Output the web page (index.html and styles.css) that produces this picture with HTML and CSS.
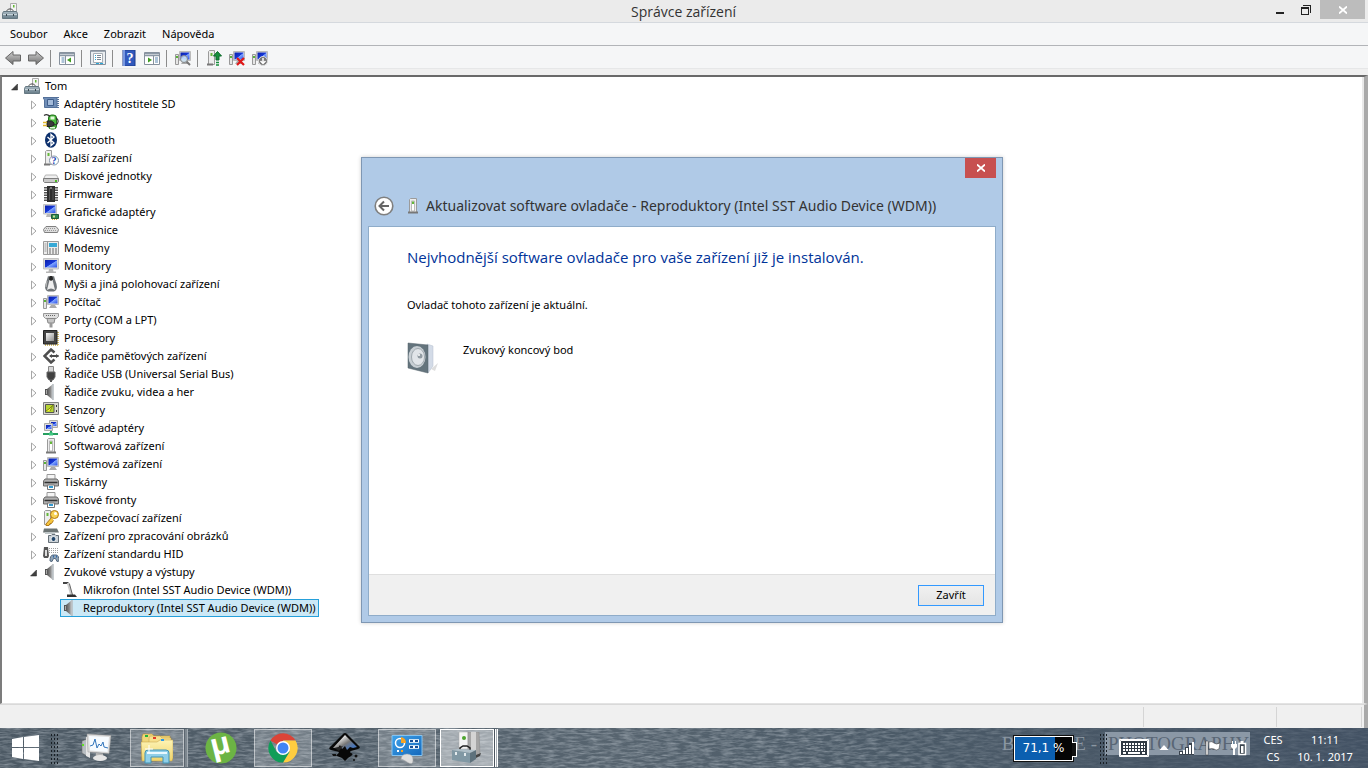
FILE: index.html
```html
<!DOCTYPE html>
<html lang="cs">
  <head>
    <meta charset="UTF-8" />
    <meta name="viewport" content="width=device-width, initial-scale=1.0" />
    <title>Správce zařízení</title>
    <link rel="stylesheet" href="styles.css">
  </head>
  <body>
    <!-- icon sprite -->
    <svg class="sprite" aria-hidden="true">
      <defs>
        <linearGradient id="g-metal" x1="0" y1="0" x2="1" y2="1"><stop offset="0" stop-color="#fafafa" /><stop offset="1" stop-color="#8e8e8e" /></linearGradient>
        <linearGradient id="g-screen" x1="0" y1="0" x2="1" y2="1"><stop offset="0" stop-color="#0a1fa8" /><stop offset="0.5" stop-color="#1738d8" /><stop offset="0.55" stop-color="#7fa4ff" /><stop offset="1" stop-color="#2a50e6" /></linearGradient>
        <linearGradient id="g-arrow" x1="0" y1="0" x2="0" y2="1"><stop offset="0" stop-color="#d0d0d0" /><stop offset="1" stop-color="#6e6e6e" /></linearGradient>
        <linearGradient id="g-box" x1="0" y1="0" x2="0" y2="1"><stop offset="0" stop-color="#a9b9c2" /><stop offset="1" stop-color="#667b87" /></linearGradient>
        <linearGradient id="g-cone" x1="0" y1="0" x2="1" y2="0"><stop offset="0" stop-color="#555" /><stop offset="0.6" stop-color="#8d8d8d" /><stop offset="1" stop-color="#d9dde0" /></linearGradient>
        <linearGradient id="g-folder" x1="0" y1="0" x2="0" y2="1"><stop offset="0" stop-color="#fdf3b4" /><stop offset="1" stop-color="#efd36b" /></linearGradient>
        <linearGradient id="g-panel" x1="0" y1="0" x2="1" y2="1"><stop offset="0" stop-color="#3fa2ea" /><stop offset="1" stop-color="#1468bb" /></linearGradient>
        <linearGradient id="g-ink" x1="0" y1="0" x2="1" y2="1"><stop offset="0.2" stop-color="#fff" /><stop offset="0.55" stop-color="#777" /><stop offset="0.8" stop-color="#4a76b8" /></linearGradient>
      </defs>

      <symbol id="i-toolbox" viewBox="0 0 16 16">
        <path d="M8.500 .5h6v9h-6z" fill="#f4f4f4" stroke="#aaa" />
        <path d="M11 2h1.500v2.500H11z" fill="#62b832" />
        <path d="M5 8.500V7.500L6.500 6h3L11 7.500v1" fill="none" stroke="#444" />
        <path d="M1.500 8.500h13l1 2v5H.5v-5z" fill="url(#g-box)" stroke="#667882" />
        <path d="M1 11.500h14" stroke="#c6d2d8" />
        <path d="M4.500 11v2M11.500 11v2" stroke="#37444c" />
      </symbol>
      <symbol id="i-sd" viewBox="0 0 16 16">
        <path d="M0 1.500h14v10H1.500V4z" fill="#6f8db6" stroke="#54719a" />
        <path d="M4.500 3.500h6v6h-6z" fill="#a4bbda" stroke="#3f5d8a" />
        <path d="M15 1v11" stroke="#54719a" stroke-dasharray="1 1" stroke-width="2" />
      </symbol>
      <symbol id="i-battery" viewBox="0 0 16 16">
        <rect x="5.500" y="1" width="8" height="14" rx="3" fill="#46b83a" stroke="#226e1a" />
        <path d="M7.500 2.500h4v3h-4zM7 13h5v1.500H7z" fill="#e4f9dc" />
        <path d="M1 1.500Q4-.5 7 2.500M13 4q2.500 1 2 4t-4 3" fill="none" stroke="#333" stroke-width="1.200" />
        <path d="M4 7h4.500l2.500 2v2l-2.500 1.500H4z" fill="#3b3b3b" stroke="#222" />
        <path d="M0 8.500h4M0 11.500h4" stroke="#e0b62d" stroke-width="1.500" />
      </symbol>
      <symbol id="i-bluetooth" viewBox="0 0 16 16">
        <ellipse cx="8" cy="8" rx="6" ry="7.800" fill="#0c2f6c" />
        <path d="M4.500 5l6.500 6-3 2.500v-11l3 2.500-6.500 6" fill="none" stroke="#fff" stroke-width="1.300" />
      </symbol>
      <symbol id="i-device" viewBox="0 0 16 16">
        <path d="M4.500 1.500l1-1h6v14h-7z" fill="#ededed" stroke="#9b9b9b" />
        <path d="M6.500 3h3v10h-3z" fill="#fff" stroke="#bbb" />
        <path d="M7 3.500h2V6H7z" fill="#65b83a" />
        <path d="M3 14.500h10" stroke="#777" stroke-width="2" />
      </symbol>
      <symbol id="i-tower" viewBox="0 0 16 16">
        <path d="M2.500 1.500l1-1h5v14h-6z" fill="#ededed" stroke="#9b9b9b" />
        <path d="M4.500 3h2v3h-2z" fill="#65b83a" />
        <path d="M1 14.500h6" stroke="#777" stroke-width="2" />
      </symbol>
      <symbol id="i-disk" viewBox="0 0 16 16">
        <path d="M2.500 7h11l2 4H.5z" fill="#f0f0f0" stroke="#b4b4b4" />
        <path d="M.5 10.500h15v3l-1 1h-13l-1-1z" fill="#c9c9c9" stroke="#7e7e7e" />
        <path d="M12 12h2v2h-2z" fill="#4ebb24" />
      </symbol>
      <symbol id="i-chip" viewBox="0 0 16 16">
        <path d="M2.500 1v14M13.500 1v14" stroke="#555" stroke-width="3" stroke-dasharray="1.500 1" />
        <path d="M4 0h8v16H4z" fill="#2d2d2d" />
        <path d="M6.500 2v12M10 2v12" stroke="#555" />
        <circle cx="8" cy="2" r="1" fill="#999" />
      </symbol>
      <symbol id="i-monitor" viewBox="0 0 16 16">
        <path d="M.5.5h15v10.500H.5z" fill="#d9d9d9" stroke="#c4c4c4" />
        <path d="M2 2h12v7.500H2z" fill="url(#g-screen)" />
        <path d="M6 11h4l.5 2.500H13V15H3v-1.500h2.500z" fill="#b5b5b5" />
      </symbol>
      <symbol id="i-display" viewBox="0 0 16 16">
        <path d="M.5.5h13v9.500H.5z" fill="#ddd" stroke="#c4c4c4" />
        <path d="M2 1.500h10.500v7.500H2z" fill="url(#g-screen)" />
        <path d="M4 10h5v3H3z" fill="#b8b8b8" />
        <path d="M8.500 10.500h7v4h-7z" fill="#2f8b52" stroke="#1e5c38" />
        <path d="M10 11.500h2v2h-2z" fill="#ccdf95" />
        <path d="M9 15.500h6" stroke="#d8ae2c" stroke-dasharray="1 1" />
      </symbol>
      <symbol id="i-keyboard" viewBox="0 0 16 16">
        <path d="M3 4.500h10l2.500 3-1 3h-13l-1-3z" fill="#dedede" stroke="#808080" />
        <path d="M3 6.500h10M2 8.500h12" stroke="#999" stroke-dasharray="1 1" />
      </symbol>
      <symbol id="i-modem" viewBox="0 0 16 16">
        <path d="M.5 1.500h15v13H.5z" fill="#ececec" stroke="#9b9b9b" />
        <path d="M4.500 1v14" stroke="#999" />
        <path d="M1.500 3h2v9h-2z" fill="#c4c4c4" />
        <path d="M6 3h8v4H6z" fill="#37a9d6" />
        <path d="M6 9h8M6 11h8M6 13h8" stroke="#686868" stroke-dasharray="2 1" />
      </symbol>
      <symbol id="i-mouse" viewBox="0 0 16 16">
        <path d="M5 0q3 2 6 0 1 4 2.500 8 1.500 6-2.500 7.500H5Q1 14 2.500 8 4 4 5 0z" fill="#6f7478" />
        <path d="M5.500 8l1-4h3l1 4 1.500 6q-4-3-8 0z" fill="#eee" />
        <path d="M6.500 0h3l.5 3.500-2 1.500-2-1.500z" fill="#252525" />
        <path d="M4 5l-1 6" stroke="#bbb" />
      </symbol>
      <symbol id="i-computer" viewBox="0 0 16 16">
        <path d="M.5 4.500h3v10h-3z" fill="#e6e6e6" stroke="#999" />
        <path d="M1 6h2v2H1z" fill="#57b336" />
        <path d="M4.500 1.500h11v9h-11z" fill="#ddd" stroke="#bbb" />
        <path d="M5.500 2.500h9v7h-9z" fill="url(#g-screen)" />
        <path d="M8 11h4l2 3H6z" fill="#aaa" />
      </symbol>
      <symbol id="i-port" viewBox="0 0 16 16">
        <path d="M.5 1.500h15v3l-2 2h-11l-2-2z" fill="#dedede" stroke="#999" />
        <path d="M3 3.500h10" stroke="#666" stroke-dasharray="1 1" />
        <path d="M4 6.500h8l-1 4.500H5z" fill="#c5c5c5" stroke="#888" />
        <path d="M6.500 11h3v4.500h-3z" fill="#999" />
      </symbol>
      <symbol id="i-cpu" viewBox="0 0 16 16">
        <path d="M15 2v13M2 15h13" stroke="#c8a93e" stroke-width="1.500" stroke-dasharray="1 1" />
        <path d="M.5.5h13.500v13.500H.5z" fill="#444" stroke="#242424" />
        <path d="M3 3h8v8H3z" fill="url(#g-metal)" />
      </symbol>
      <symbol id="i-storage" viewBox="0 0 16 16">
        <path d="M11.500 4.500L8 1.500 1.500 8 8 14.500l3.500-3" fill="none" stroke="#4e4e4e" stroke-width="2.500" />
        <path d="M7 8h8.500" stroke="#4e4e4e" stroke-width="2" />
        <path d="M6 8l3-2v4zM16 8l-3-2v4z" fill="#4e4e4e" />
      </symbol>
      <symbol id="i-usb" viewBox="0 0 16 16">
        <path d="M5.500.5h5v6h-5z" fill="#d8d8d8" stroke="#888" />
        <path d="M4 6h8v5l-2 3H6l-2-3z" fill="#414141" stroke="#666" />
        <path d="M8 14v2" stroke="#555" stroke-width="2" />
      </symbol>
      <symbol id="i-speaker" viewBox="0 0 16 16">
        <path d="M2 5h2.500v6H2z" fill="#555" />
        <path d="M4 5l6-5v16l-6-5z" fill="url(#g-cone)" />
        <path d="M10 0v16" stroke="#b6bcc1" stroke-width="1.500" />
        <path d="M3.500 6v4" stroke="#aaa" />
      </symbol>
      <symbol id="i-sensor" viewBox="0 0 16 16">
        <path d="M.5.5h15v12H.5z" fill="#dadacf" stroke="#828282" />
        <path d="M2.500 2.500h8.500v8H2.500z" fill="#b7d432" stroke="#555" />
        <path d="M3 9l3-2 4-4-3 6" fill="#fff23b" stroke="#7b8d12" />
        <path d="M13.500 3v2M13.500 8v2" stroke="#333" />
      </symbol>
      <symbol id="i-network" viewBox="0 0 16 16">
        <path d="M6.500.5h8v7h-8z" fill="#ddd" stroke="#aaa" />
        <path d="M8 2h5.500v4H8z" fill="url(#g-screen)" />
        <path d="M1.500 3.500h8v7h-8z" fill="#ddd" stroke="#aaa" />
        <path d="M3 5h5.500v4H3z" fill="url(#g-screen)" />
        <path d="M0 14h15M8 11v3" stroke="#26a060" stroke-width="2" />
        <path d="M6 12.500h4v3H6z" fill="#41c783" />
      </symbol>
      <symbol id="i-printer" viewBox="0 0 16 16">
        <path d="M4 .5h8v6H4z" fill="#f4f4f4" stroke="#999" />
        <path d="M2 5h12l1.500 2v5H.5V7z" fill="#b0b0b0" stroke="#6a6a6a" />
        <path d="M1.500 8.500h13" stroke="#333" stroke-width="1.500" />
        <path d="M4.500 11h7v4.500h-7z" fill="#fff" stroke="#777" />
        <path d="M6 13h4" stroke="#349ad0" stroke-width="2" />
      </symbol>
      <symbol id="i-key" viewBox="0 0 16 16">
        <path d="M1.500 1.500l1-1h5v14h-6z" fill="#ededed" stroke="#999" />
        <path d="M3.500 3h2v3h-2z" fill="#65b83a" />
        <path d="M9 7l-6 7v1.500h3l1-2h1.500l2-3" fill="#f5c53e" stroke="#b37a16" />
        <circle cx="11.500" cy="4.500" r="4" fill="#f8d255" stroke="#b37a16" />
        <circle cx="12.500" cy="3.500" r="1.500" fill="#fff" />
      </symbol>
      <symbol id="i-camera" viewBox="0 0 16 16">
        <path d="M1 .5h13l2 4H0z" fill="#6c7474" />
        <path d="M2 5h10" stroke="#bfc6c8" stroke-width="2" />
        <path d="M5.500 7.500H8l1-1h3l1 1h2.500v7h-10z" fill="#c8d0d6" stroke="#667078" />
        <circle cx="10.500" cy="11" r="2.500" fill="#24486d" stroke="#eee" />
      </symbol>
      <symbol id="i-hid" viewBox="0 0 16 16">
        <path d="M1 1h4l1 9-1 2H1l-1-2z" fill="#555" />
        <path d="M2 4h2v6H2z" fill="#ddd" />
        <path d="M6 2.500h10M6 4.500h10M6 6.500h10" stroke="#a0a0a0" stroke-dasharray="1 1" />
        <path d="M7 15q0-6 3-6h3q3 0 3 6l-2 .5-1.500-3h-2L9 15.500z" fill="#8fa3b6" stroke="#53677c" />
        <path d="M10 10.500h1M13 10.500h1" stroke="#2f67a8" stroke-width="2" />
      </symbol>
      <symbol id="i-mic" viewBox="0 0 16 16">
        <path d="M1 0h5l2 2H1z" fill="#444" />
        <path d="M6 1l3.500 12" stroke="#ccc" stroke-width="2.500" />
        <path d="M7.500 2l3 11" stroke="#666" />
        <path d="M5 12.500h8l2 2.500H5z" fill="#303030" />
      </symbol>

      <!-- toolbar -->
      <symbol id="t-back" viewBox="0 0 16 16"><path d="M.5 8L8 1.500V5h7.500v6H8v3.500z" fill="url(#g-arrow)" stroke="#666" /></symbol>
      <symbol id="t-forward" viewBox="0 0 16 16"><path d="M15.500 8L8 1.500V5H.5v6H8v3.500z" fill="url(#g-arrow)" stroke="#666" /></symbol>
      <symbol id="t-tree" viewBox="0 0 16 16">
        <path d="M.5 2.500h15v12H.5z" fill="#fff" stroke="#87919d" />
        <path d="M1 3.500h14M1 5.500h14" stroke="#8b98a5" stroke-width="1.500" />
        <path d="M2.500 8h3M2.500 10h3M2.500 12h3" stroke="#5b87af" /><path d="M6.500 6v9" stroke="#87919d" />
        <path d="M12 7.500v5l-4-2.500z" fill="#3f9c21" />
      </symbol>
      <symbol id="t-props" viewBox="0 0 16 16">
        <path d="M.5.5h15v14H.5z" fill="#e9edf0" stroke="#87919d" />
        <path d="M1 1.500h14" stroke="#9fa9b4" />
        <path d="M3.500 3.500h9v9h-9z" fill="#fff" stroke="#a6adb5" />
        <path d="M5 5.500h1M5 7.500h1M5 9.500h1" stroke="#2aa8d8" /><path d="M7 5.500h4M7 7.500h4M7 9.500h4" stroke="#7c8894" />
        <path d="M6 13.500h3M10 13.500h3" stroke="#2aa8d8" />
      </symbol>
      <symbol id="t-action" viewBox="0 0 16 16">
        <path d="M.5 2.500h15v12H.5z" fill="#fff" stroke="#87919d" />
        <path d="M1 3.500h14M1 5.500h14" stroke="#8b98a5" stroke-width="1.500" />
        <path d="M11 8h3M11 10h3M11 12h3" stroke="#5b87af" /><path d="M9.500 6v9" stroke="#87919d" />
        <path d="M4 7.500v5l4-2.500z" fill="#3f9c21" />
      </symbol>
      <symbol id="t-scan" viewBox="0 0 16 16">
        <use href="#i-computer" />
        <path d="M11.500 11.500l3.500 3.500" stroke="#777" stroke-width="2" />
        <circle cx="9" cy="9" r="3.500" fill="#cfe8fa" fill-opacity="0.800" stroke="#888" />
      </symbol>
      <symbol id="t-update" viewBox="0 0 16 16">
        <use href="#i-tower" />
        <path d="M11.500 1.500L15.500 6h-2.500v4h-3V6H7.500z" fill="#178f3c" stroke="#0c6b2a" />
        <path d="M10 12.500h3M10 15h3" stroke="#178f3c" stroke-width="1.500" />
      </symbol>
      <symbol id="t-remove" viewBox="0 0 16 16">
        <use href="#i-computer" />
        <path d="M8 8l7 7M15 8l-7 7" stroke="#e01818" stroke-width="2.200" />
      </symbol>
      <symbol id="t-disable" viewBox="0 0 16 16">
        <use href="#i-computer" />
        <circle cx="11" cy="11" r="4.500" fill="#777" stroke="#ddd" />
        <path d="M11 8v5M8.500 11l2.500 2.500 2.500-2.500" fill="none" stroke="#fff" stroke-width="1.500" />
      </symbol>

      <symbol id="s-closed" viewBox="0 0 8 10"><path d="M1.500 1v8l4.500-4z" fill="#fff" stroke="#a6a6a6" /></symbol>
      <symbol id="s-open" viewBox="0 0 8 10"><path d="M6.500 2v6H.5z" fill="#404040" stroke="#262626" stroke-width="0.500" /></symbol>

      <!-- taskbar -->
      <symbol id="b-monitor" viewBox="0 0 32 32">
        <path d="M1 9l5-2v17l-5-3z" fill="#b9bec2" stroke="#666" stroke-width="0.500" />
        <path d="M5 5l4-1v22l-4-2z" fill="#e6e6e6" />
        <path d="M1 12h2v2H1z" fill="#62e027" />
        <path d="M6 2l24 1.500-2 18L7 20z" fill="#dcdcdc" stroke="#999" stroke-width="0.500" />
        <path d="M8 4l20 1-1.500 15L9 18.500z" fill="#f6fbff" />
        <path d="M9 14l3-1 2-6 2 9 2-4 2 2 2-4 1 5 4 1" fill="none" stroke="#3276bd" />
        <path d="M15 21l7 .500.5 4h-8z" fill="#b5b5b5" />
        <ellipse cx="19" cy="26" rx="7" ry="3" fill="#e5e5e5" />
      </symbol>
      <symbol id="b-explorer" viewBox="0 0 32 32">
        <path d="M1 5l1-3h9l2 2h16v24H1z" fill="#efd67a" stroke="#bc9232" stroke-width="0.500" />
        <path d="M8 6l1-2h10l2 2h9v22H8z" fill="#f7e08c" stroke="#c29e45" stroke-width="0.500" />
        <path d="M0 10h16l3-2h13v18l-1 3H1z" fill="url(#g-folder)" stroke="#c29e45" stroke-width="0.500" />
        <path d="M4 3h3v2H4z" fill="#23b33a" /><path d="M12 5h3v2h-3z" fill="#e03d2b" /><path d="M20 7h3v2h-3z" fill="#2b99e8" />
        <path d="M4 31V21q0-3 3-3h18q3 0 3 3v10h-6v-6H10v6z" fill="#90cfe8" stroke="#4193b6" />
        <path d="M6 21h20" stroke="#e9f9ff" stroke-width="2" />
        <path d="M8 13v8M4 17h8" stroke="#fff" />
      </symbol>
      <symbol id="b-chrome" viewBox="0 0 32 32">
        <path d="M16 16L3.500 8.500A14.500 14.500 0 0 1 28.500 8.500H16z" fill="#db4437" />
        <path d="M16 8.500h12.500A14.500 14.500 0 0 1 16 30.500l6.500-10.700z" fill="#ffcd40" />
        <path d="M3.500 8.500A14.500 14.500 0 0 0 16 30.500l6.500-10.700-13 0z" fill="#0f9d58" />
        <circle cx="16" cy="16" r="7" fill="#fff" /><circle cx="16" cy="16" r="5.500" fill="#4285f4" />
      </symbol>
      <symbol id="b-inkscape" viewBox="0 0 32 32">
        <path d="M16 1q1 0 2 1l12 12q2 2-1 3l-7 2q-2 1 0 2 3 1 0 3l-3 2-3 3-3-3-5-2q-2-1 1-2l1-2-8-2q-3-1-1-3L14 2q1-1 2-1z" fill="#080808" />
        <path d="M16 3L28 15l-4 1-3-1-3 3-2-4-3 3-2-4-2 3-5 0z" fill="url(#g-ink)" />
        <path d="M5 16l9-2-4 5z" fill="#222" />
        <circle cx="27" cy="24" r="1.500" fill="#111" /><circle cx="25" cy="28" r="1" fill="#111" /><path d="M3 22h4v2H4z" fill="#111" />
      </symbol>
      <symbol id="b-panel" viewBox="0 0 32 32">
        <path d="M1 3.500h30v20H1z" fill="url(#g-panel)" stroke="#85c3f0" />
        <circle cx="9" cy="11" r="4.500" fill="none" stroke="#fff" stroke-width="1.500" />
        <path d="M10 5v6h5a6 6 0 0 0-5-6z" fill="#f6a424" />
        <path d="M18 9h10M18 15h10" stroke="#fff" stroke-width="3.500" /><path d="M19 9h3M24 9h3M19 15h3M24 15h3" stroke="#174f96" stroke-width="2" />
        <path d="M6 19h2" stroke="#fff" stroke-width="2" /><path d="M10 19h2" stroke="#f6a424" stroke-width="2" />
        <path d="M10 28q0-6 6-6t6 6-6 2-6-2z" fill="#ddd" stroke="#aaa" stroke-width="0.500" />
      </symbol>
      <symbol id="b-devices" viewBox="0 0 32 32">
        <path d="M8 0h9v17H8z" fill="#f4f4f4" stroke="#aaa" stroke-width="0.500" /><path d="M17 0h11l1 22-8 3h-4z" fill="#a5a5a5" stroke="#888" stroke-width="0.500" />
        <path d="M20 0h5v23l-5 1z" fill="#d4d4d4" /><path d="M25 23l5-2-1 3-4 2z" fill="#444" />
        <circle cx="13" cy="6" r="2" fill="#4da52f" />
        <path d="M9 18v-2l3-2h4l3 2v2" fill="none" stroke="#222" stroke-width="1.500" />
        <path d="M1 18l6-1 18 1-6 3z" fill="#aebec7" /><path d="M1 18l18 3v10L1 28z" fill="#8198a4" /><path d="M19 21l6-3v9l-6 4z" fill="#5d717c" />
        <path d="M5 20v3M14 21v3" stroke="#e3eaed" stroke-width="2" />
      </symbol>
      <symbol id="b-speaker" viewBox="0 0 32 32">
        <path d="M24 27l7-6-3 8z" fill="#dedede" />
        <path d="M20 2l6 2v20l-5 7z" fill="#d3dbe7" stroke="#b5bfcd" stroke-width="0.500" />
        <path d="M1 1l20 2v28L1 26z" fill="#64747d" stroke="#536169" stroke-width="0.500" />
        <ellipse cx="10" cy="15" rx="8.500" ry="11" fill="#c8cfd4" /><ellipse cx="11" cy="15" rx="6.500" ry="8.500" fill="#e1e5e9" stroke="#9fa8ae" />
        <circle cx="13" cy="14" r="2.500" fill="#919ba2" /><circle cx="12" cy="13" r="1" fill="#fff" />
      </symbol>
    </svg>

    <main class="window">
      <header class="titlebar">
        <svg class="icon app-icon"><use href="#i-toolbox" /></svg>
        <h1>Správce zařízení</h1>
        <div class="window-buttons">
          <button class="win-btn" aria-label="Minimalizovat"><svg width="10" height="10" viewBox="0 0 10 10"><path d="M1 7h8v2H1z" fill="#222" /></svg></button>
          <button class="win-btn" aria-label="Obnovit"><svg width="10" height="10" viewBox="0 0 10 10"><path d="M0 2h8v8H0zM1 4v5h6V4zM2 0h8v8H9V1H2z" fill="#222" fill-rule="evenodd" /></svg></button>
          <button class="win-btn win-close" aria-label="Zavřít okno"><svg width="8" height="8" viewBox="0 0 8 8"><path d="M0 .5l8 7M8 .5l-8 7" stroke="#fff" stroke-width="1.800" /></svg></button>
        </div>
      </header>

      <nav class="menubar">
        <button>Soubor</button>
        <button>Akce</button>
        <button>Zobrazit</button>
        <button>Nápověda</button>
      </nav>

      <div class="toolbar">
        <button aria-label="Zpět"><svg class="icon"><use href="#t-back" /></svg></button>
        <button aria-label="Vpřed"><svg class="icon"><use href="#t-forward" /></svg></button>
        <span class="separator"></span>
        <button aria-label="Strom konzoly"><svg class="icon"><use href="#t-tree" /></svg></button>
        <span class="separator"></span>
        <button aria-label="Vlastnosti"><svg class="icon"><use href="#t-props" /></svg></button>
        <span class="separator"></span>
        <button aria-label="Nápověda">
          <svg class="icon" viewBox="0 0 16 16">
            <path d="M2 0h12v16H2z" fill="#3159bd" stroke="#1f3c8a" /><path d="M2 0h2v16H2z" fill="#7898df" />
            <text x="9" y="13" text-anchor="middle" class="svg-glyph" fill="#fff">?</text>
          </svg>
        </button>
        <button aria-label="Podokno akcí"><svg class="icon"><use href="#t-action" /></svg></button>
        <span class="separator"></span>
        <button aria-label="Vyhledat změny hardwaru"><svg class="icon"><use href="#t-scan" /></svg></button>
        <span class="separator"></span>
        <button aria-label="Aktualizovat software ovladače"><svg class="icon"><use href="#t-update" /></svg></button>
        <button aria-label="Odinstalovat"><svg class="icon"><use href="#t-remove" /></svg></button>
        <button aria-label="Zakázat"><svg class="icon"><use href="#t-disable" /></svg></button>
      </div>

      <section class="tree-pane">
        <ul class="tree">
          <li>
            <div class="row"><button class="toggle" aria-label="Sbalit"><svg><use href="#s-open" /></svg></button><span class="item"><svg class="icon"><use href="#i-toolbox" /></svg>Tom</span></div>
            <ul>
              <li><div class="row"><button class="toggle" aria-label="Rozbalit"><svg><use href="#s-closed" /></svg></button><span class="item"><svg class="icon"><use href="#i-sd" /></svg>Adaptéry hostitele SD</span></div></li>
              <li><div class="row"><button class="toggle" aria-label="Rozbalit"><svg><use href="#s-closed" /></svg></button><span class="item"><svg class="icon"><use href="#i-battery" /></svg>Baterie</span></div></li>
              <li><div class="row"><button class="toggle" aria-label="Rozbalit"><svg><use href="#s-closed" /></svg></button><span class="item"><svg class="icon"><use href="#i-bluetooth" /></svg>Bluetooth</span></div></li>
              <li>
                <div class="row">
                  <button class="toggle" aria-label="Rozbalit"><svg><use href="#s-closed" /></svg></button>
                  <span class="item">
                    <svg class="icon" viewBox="0 0 16 16">
                      <use href="#i-tower" />
                      <circle cx="11" cy="10.500" r="4.500" fill="#fff" stroke="#8492a5" />
                      <text x="11" y="14" text-anchor="middle" class="svg-glyph small-glyph" fill="#1742b5">?</text>
                    </svg>Další zařízení</span>
                </div>
              </li>
              <li><div class="row"><button class="toggle" aria-label="Rozbalit"><svg><use href="#s-closed" /></svg></button><span class="item"><svg class="icon"><use href="#i-disk" /></svg>Diskové jednotky</span></div></li>
              <li><div class="row"><button class="toggle" aria-label="Rozbalit"><svg><use href="#s-closed" /></svg></button><span class="item"><svg class="icon"><use href="#i-chip" /></svg>Firmware</span></div></li>
              <li><div class="row"><button class="toggle" aria-label="Rozbalit"><svg><use href="#s-closed" /></svg></button><span class="item"><svg class="icon"><use href="#i-display" /></svg>Grafické adaptéry</span></div></li>
              <li><div class="row"><button class="toggle" aria-label="Rozbalit"><svg><use href="#s-closed" /></svg></button><span class="item"><svg class="icon"><use href="#i-keyboard" /></svg>Klávesnice</span></div></li>
              <li><div class="row"><button class="toggle" aria-label="Rozbalit"><svg><use href="#s-closed" /></svg></button><span class="item"><svg class="icon"><use href="#i-modem" /></svg>Modemy</span></div></li>
              <li><div class="row"><button class="toggle" aria-label="Rozbalit"><svg><use href="#s-closed" /></svg></button><span class="item"><svg class="icon"><use href="#i-monitor" /></svg>Monitory</span></div></li>
              <li><div class="row"><button class="toggle" aria-label="Rozbalit"><svg><use href="#s-closed" /></svg></button><span class="item"><svg class="icon"><use href="#i-mouse" /></svg>Myši a jiná polohovací zařízení</span></div></li>
              <li><div class="row"><button class="toggle" aria-label="Rozbalit"><svg><use href="#s-closed" /></svg></button><span class="item"><svg class="icon"><use href="#i-computer" /></svg>Počítač</span></div></li>
              <li><div class="row"><button class="toggle" aria-label="Rozbalit"><svg><use href="#s-closed" /></svg></button><span class="item"><svg class="icon"><use href="#i-port" /></svg>Porty (COM a LPT)</span></div></li>
              <li><div class="row"><button class="toggle" aria-label="Rozbalit"><svg><use href="#s-closed" /></svg></button><span class="item"><svg class="icon"><use href="#i-cpu" /></svg>Procesory</span></div></li>
              <li><div class="row"><button class="toggle" aria-label="Rozbalit"><svg><use href="#s-closed" /></svg></button><span class="item"><svg class="icon"><use href="#i-storage" /></svg>Řadiče paměťových zařízení</span></div></li>
              <li><div class="row"><button class="toggle" aria-label="Rozbalit"><svg><use href="#s-closed" /></svg></button><span class="item"><svg class="icon"><use href="#i-usb" /></svg>Řadiče USB (Universal Serial Bus)</span></div></li>
              <li><div class="row"><button class="toggle" aria-label="Rozbalit"><svg><use href="#s-closed" /></svg></button><span class="item"><svg class="icon"><use href="#i-speaker" /></svg>Řadiče zvuku, videa a her</span></div></li>
              <li><div class="row"><button class="toggle" aria-label="Rozbalit"><svg><use href="#s-closed" /></svg></button><span class="item"><svg class="icon"><use href="#i-sensor" /></svg>Senzory</span></div></li>
              <li><div class="row"><button class="toggle" aria-label="Rozbalit"><svg><use href="#s-closed" /></svg></button><span class="item"><svg class="icon"><use href="#i-network" /></svg>Síťové adaptéry</span></div></li>
              <li><div class="row"><button class="toggle" aria-label="Rozbalit"><svg><use href="#s-closed" /></svg></button><span class="item"><svg class="icon"><use href="#i-device" /></svg>Softwarová zařízení</span></div></li>
              <li><div class="row"><button class="toggle" aria-label="Rozbalit"><svg><use href="#s-closed" /></svg></button><span class="item"><svg class="icon"><use href="#i-computer" /></svg>Systémová zařízení</span></div></li>
              <li><div class="row"><button class="toggle" aria-label="Rozbalit"><svg><use href="#s-closed" /></svg></button><span class="item"><svg class="icon"><use href="#i-printer" /></svg>Tiskárny</span></div></li>
              <li><div class="row"><button class="toggle" aria-label="Rozbalit"><svg><use href="#s-closed" /></svg></button><span class="item"><svg class="icon"><use href="#i-printer" /></svg>Tiskové fronty</span></div></li>
              <li><div class="row"><button class="toggle" aria-label="Rozbalit"><svg><use href="#s-closed" /></svg></button><span class="item"><svg class="icon"><use href="#i-key" /></svg>Zabezpečovací zařízení</span></div></li>
              <li><div class="row"><button class="toggle" aria-label="Rozbalit"><svg><use href="#s-closed" /></svg></button><span class="item"><svg class="icon"><use href="#i-camera" /></svg>Zařízení pro zpracování obrázků</span></div></li>
              <li><div class="row"><button class="toggle" aria-label="Rozbalit"><svg><use href="#s-closed" /></svg></button><span class="item"><svg class="icon"><use href="#i-hid" /></svg>Zařízení standardu HID</span></div></li>
              <li>
                <div class="row"><button class="toggle" aria-label="Sbalit"><svg><use href="#s-open" /></svg></button><span class="item"><svg class="icon"><use href="#i-speaker" /></svg>Zvukové vstupy a výstupy</span></div>
                <ul>
                  <li><div class="row leaf"><span class="item"><svg class="icon"><use href="#i-mic" /></svg>Mikrofon (Intel SST Audio Device (WDM))</span></div></li>
                  <li><div class="row leaf"><span class="item selected"><svg class="icon"><use href="#i-speaker" /></svg>Reproduktory (Intel SST Audio Device (WDM))</span></div></li>
                </ul>
              </li>
            </ul>
          </li>
        </ul>
      </section>

      <footer class="statusbar"><span></span><span></span><span></span></footer>
    </main>

    <section class="dialog" role="dialog" aria-labelledby="dialog-title">
      <header class="dialog-header">
        <button class="dialog-close" aria-label="Zavřít dialog"><svg width="8" height="8" viewBox="0 0 8 8"><path d="M0 .5l8 7M8 .5l-8 7" stroke="#fff" stroke-width="1.800" /></svg></button>
        <div class="dialog-title">
          <button class="back" aria-label="Zpět"><svg width="20" height="20" viewBox="0 0 20 20"><circle cx="10" cy="10" r="8.800" fill="#fff" stroke="#7f7f7f" stroke-width="1.600" /><path d="M15 10H6M10 5.500L5.500 10l4.500 4.500" fill="none" stroke="#666" stroke-width="2" /></svg></button>
          <svg class="icon"><use href="#i-device" /></svg>
          <h2 id="dialog-title">Aktualizovat software ovladače - Reproduktory (Intel SST Audio Device (WDM))</h2>
        </div>
      </header>
      <div class="dialog-client">
        <div class="dialog-body">
          <h3>Nejvhodnější software ovladače pro vaše zařízení již je instalován.</h3>
          <p>Ovladač tohoto zařízení je aktuální.</p>
          <div class="device">
            <svg class="icon-large"><use href="#b-speaker" /></svg>
            <span>Zvukový koncový bod</span>
          </div>
        </div>
        <footer class="dialog-footer"><button class="default-btn">Zavřít</button></footer>
      </div>
    </section>

    <footer class="taskbar">
      <!-- wallpaper showing through the glass -->
      <svg class="water" aria-hidden="true">
        <filter id="waves" x="0" y="0" width="100%" height="100%">
          <feTurbulence type="fractalNoise" baseFrequency="0.090 0.450" numOctaves="3" seed="8" />
          <feColorMatrix values="0 0 0 0 0.800  0 0 0 0 0.850  0 0 0 0 0.900  2 0 0 0 -0.700" />
        </filter>
        <rect width="100%" height="100%" filter="url(#waves)" />
      </svg>
      <div class="watermark"><span>B</span><span>E -</span><span class="plate">PHOTOGRAPHY</span></div>

      <button class="start" aria-label="Start"><svg width="27" height="26" viewBox="0 0 27 26"><path d="M0 4l11-2v10H0zM12 2l15-2v12H12zM0 13h11v11L0 22zM12 13h15v13l-15-2z" fill="#fff" /></svg></button>
      <span class="grip"></span>
      <nav class="tasks">
        <button class="task" aria-label="Sledování prostředků"><svg class="icon-large"><use href="#b-monitor" /></svg></button>
        <button class="task open stacked" aria-label="Průzkumník"><svg class="icon-large"><use href="#b-explorer" /></svg></button>
        <button class="task" aria-label="uTorrent">
          <svg class="icon-large logo" viewBox="0 0 32 32">
            <circle cx="16" cy="16" r="15.500" fill="#6cb444" />
            <g transform="rotate(-14 16 16)"><text x="16" y="22" text-anchor="middle" class="svg-mu" fill="#fff">µ</text></g>
          </svg>
        </button>
        <button class="task open" aria-label="Chrome"><svg class="icon-large"><use href="#b-chrome" /></svg></button>
        <button class="task" aria-label="Inkscape"><svg class="icon-large"><use href="#b-inkscape" /></svg></button>
        <button class="task open" aria-label="Ovládací panely"><svg class="icon-large"><use href="#b-panel" /></svg></button>
        <button class="task open stacked active" aria-label="Správce zařízení"><svg class="icon-large"><use href="#b-devices" /></svg></button>
      </nav>

      <div class="tray">
        <div class="charge">71,1 %</div>
        <span class="grip"></span>
        <div class="tray-icons">
          <button aria-label="Dotyková klávesnice"><svg width="30" height="18" viewBox="0 0 30 18"><path d="M.5.5h29v17H.5z" fill="#2f3943" stroke="#fff" /><path d="M1.500 1.500h27v15h-27z" fill="none" stroke="#fff" /><path d="M4 5h22M4 8h22M4 11h22" stroke="#fff" stroke-width="2" stroke-dasharray="2 1" /><path d="M4 14h3M9 14h12M23 14h3" stroke="#fff" stroke-width="2" /></svg></button>
          <button aria-label="Zobrazit skryté ikony"><svg width="10" height="6" viewBox="0 0 10 6"><path d="M5 0l4.500 5h-9z" fill="#fff" /></svg></button>
          <button aria-label="Síť"><svg width="16" height="14" viewBox="0 0 16 14"><path d="M0 10h15v4H0zM6 6h9v5H6zM10 2h5v5h-5z" fill="#39434d" /><path d="M1 11h2v2H1zM4 9h2v4H4zM7 7h2v6H7zM10 4h2v9h-2zM13 1h2v12h-2z" fill="#fff" /></svg></button>
          <button aria-label="Centrum akcí"><svg width="16" height="16" viewBox="0 0 16 16"><path d="M1 1h2v14H1zM4 2q3-1 5 1 2 2 6 0l-1 6q-3 2-5 0-2-1-5 0z" fill="#fff" stroke="#333" stroke-width="0.500" /></svg></button>
          <button aria-label="Baterie"><svg width="16" height="16" viewBox="0 0 16 16"><path d="M8 3.500h6.500v11H8z" fill="#39434d" stroke="#fff" stroke-width="1.500" /><path d="M9.500 1h3v2h-3zM10 6h2.500v7H10z" fill="#fff" /><path d="M1.500 1v4M4.500 1v4" stroke="#fff" /><path d="M0 4h6v3L4 9v6H2V9L0 7z" fill="#fff" /></svg></button>
        </div>
        <div class="language"><span>CES</span><span>CS</span></div>
        <time class="clock" datetime="2017-01-10T11:11"><span>11:11</span><span>10. 1. 2017</span></time>
      </div>
    </footer>
  </body>
</html>
```
FILE: styles.css
```css
* {
  box-sizing: border-box;
}
body {
  margin: 0;
  height: 100vh;
  display: flex;
  flex-direction: column;
  overflow: hidden;
  background: #f0f0f0;
  color: #000;
  font-family: "Noto Sans", "Open Sans", sans-serif;
  font-size: 11px;
  line-height: 16px;
}
h1,
h2,
h3,
p,
ul {
  margin: 0;
  padding: 0;
  font-weight: normal;
}
ul {
  list-style: none;
}
button {
  display: flex;
  align-items: center;
  justify-content: center;
  padding: 0;
  border: none;
  background: none;
  color: inherit;
  font: inherit;
}
svg {
  display: block;
  flex: none;
}
.sprite {
  position: absolute;
  width: 0;
  height: 0;
}
.icon {
  width: 16px;
  height: 16px;
}
.icon-large {
  width: 32px;
  height: 32px;
}
.logo {
  overflow: visible;
}
.svg-glyph {
  font-family: "Liberation Serif", serif;
  font-size: 14px;
  font-weight: bold;
}
.small-glyph {
  font-size: 10px;
}
.svg-mu {
  font-family: "Open Sans", sans-serif;
  font-size: 30px;
  font-weight: bold;
}

/* main window */
.window {
  flex: 1;
  min-height: 0;
  display: flex;
  flex-direction: column;
}
.titlebar {
  display: grid;
  grid-template-columns: 1fr auto 1fr;
  height: 23px;
  padding: 0 3px 0 2px;
  background: #ebebeb;
  border-bottom: 1px solid #d5d9de;
}
.app-icon {
  margin-top: 3px;
}
.titlebar h1 {
  font-family: "Open Sans", sans-serif;
  font-size: 14px;
  line-height: 23px;
  color: #333;
}
.window-buttons {
  display: flex;
  justify-content: flex-end;
}
.win-btn {
  width: 26px;
  height: 19px;
  padding-right: 2px;
}
.win-close {
  width: 45px;
  padding-right: 0;
  background: #bcbcbc;
}
.menubar {
  display: flex;
  height: 23px;
  padding-left: 2px;
  background: #f5f6f7;
  border-bottom: 1px solid #b2b4b8;
}
.menubar button {
  padding: 0 8px;
}
.toolbar {
  display: flex;
  align-items: center;
  height: 23px;
  padding: 2px 2px 0;
  background: #f5f6f7;
  border-bottom: 1px solid #e6e7e8;
}
.toolbar button {
  width: 23px;
  height: 20px;
  padding-right: 1px;
}
.separator {
  width: 1px;
  height: 17px;
  margin: 0 5px 0 2px;
  background: #8c8c8c;
}
.tree-pane {
  flex: 1;
  min-height: 0;
  margin-top: 6px;
  background: #fff;
  border: 2px solid #696969;
  border-left-color: #7c7c7c;
  border-right: 4px solid #a9a9a9;
  border-bottom: 1px solid #e3e3e3;
  box-shadow: inset -2px 0 #e9e9e9;
  overflow: hidden;
}
.tree {
  padding-left: 4px;
}
.tree ul {
  padding-left: 19px;
}
.row {
  display: flex;
  height: 18px;
}
.leaf {
  padding-left: 16px;
}
.toggle {
  width: 16px;
  padding: 2px 0 0 1px;
}
.toggle svg {
  width: 8px;
  height: 10px;
}
.item {
  display: flex;
  align-items: center;
  gap: 5px;
  height: 18px;
  padding: 0 3px 0 1px;
  border: 1px solid transparent;
  white-space: nowrap;
}
.selected {
  background: #cbe8f6;
  border-color: #26a0da;
}
.statusbar {
  display: flex;
  justify-content: flex-end;
  height: 24px;
  padding: 2px 2px 1px;
  border-top: 1px solid #d9d9d9;
  border-right: 4px solid #a9a9a9;
}
.statusbar span {
  flex: 1;
  border-right: 1px solid #d5d5d5;
}
.statusbar span + span {
  flex: none;
  width: 133px;
}
.statusbar span:last-child {
  width: 85px;
}

/* update wizard, floats over the main window */
.dialog {
  position: absolute;
  top: 157px;
  left: 361px;
  width: 642px;
  height: 466px;
  display: flex;
  flex-direction: column;
  padding: 0 6px 6px;
  background: #b0cae7;
  border: 1px solid #7f97b3;
  box-shadow: 0 0 4px rgba(0, 0, 0, 0.2);
}
.dialog-header {
  height: 68px;
}
.dialog-close {
  width: 31px;
  height: 20px;
  margin-left: auto;
  background: #c75050;
}
.dialog-title {
  display: flex;
  align-items: center;
  height: 56px;
  padding-left: 6px;
}
.dialog-title .icon {
  margin: 0 5px 0 11px;
}
.dialog-title h2 {
  font-size: 14px;
  line-height: 20px;
  color: #333;
  white-space: nowrap;
}
.dialog-client {
  flex: 1;
  display: flex;
  flex-direction: column;
  background: #fff;
  border: 1px solid #8facc9;
}
.dialog-body {
  flex: 1;
  padding: 19px 38px;
}
.dialog-body h3 {
  font-family: "Open Sans", sans-serif;
  font-size: 15px;
  line-height: 22px;
  color: #003399;
}
.dialog-body p {
  margin-top: 29px;
}
.device {
  display: flex;
  gap: 24px;
  margin-top: 29px;
}
.dialog-footer {
  display: flex;
  align-items: center;
  justify-content: flex-end;
  height: 41px;
  padding-right: 11px;
  background: #f0f0f0;
  border-top: 1px solid #dfdfdf;
}
.default-btn {
  width: 66px;
  height: 21px;
  background: linear-gradient(#f0f0f0, #e5e5e5);
  border: 1px solid #3399ff;
}

/* taskbar */
.taskbar {
  position: relative;
  display: flex;
  align-items: center;
  height: 40px;
  background: linear-gradient(to right, #4c5964, #57646f 45%, #4b5a67 65%, #435264);
  color: #fff;
}
.taskbar > * {
  position: relative;
}
.taskbar .water {
  position: absolute;
  inset: 0;
  width: 100%;
  height: 100%;
  opacity: 0.35;
  -webkit-mask-image: linear-gradient(to right, #000 60%, rgba(0, 0, 0, 0.3) 80%);
  mask-image: linear-gradient(to right, #000 60%, rgba(0, 0, 0, 0.3) 80%);
}
.taskbar .watermark {
  position: absolute;
  top: 4px;
  right: 118px;
  display: flex;
  font-family: "Liberation Serif", serif;
  font-size: 19px;
  line-height: 23px;
  color: #8a96a2;
}
.watermark span + span {
  margin-left: 60px;
}
.watermark span.plate {
  width: 145px;
  margin-left: 8px;
  padding-left: 3px;
  background: #8b98a6;
  color: #596675;
}
.start {
  width: 50px;
  height: 40px;
}
.grip {
  width: 8px;
  height: 31px;
  background: radial-gradient(circle, #1a2026 1px, transparent 1px) 0 0 / 3px 4px;
}
.tasks {
  display: flex;
  gap: 4px;
  margin-left: 10px;
}
.task {
  width: 58px;
  height: 38px;
}
.open {
  background: rgba(255, 255, 255, 0.2);
  border: 1px solid rgba(255, 255, 255, 0.5);
}
.stacked {
  width: 54px;
  margin-right: 4px;
  box-shadow: 1px 0 #5c6670, 3px 0 #7d878f, 4px 0 #a4acb3;
}
.active {
  background: rgba(255, 255, 255, 0.45);
  border-color: #fff;
  box-shadow: 1px 0 #4b555f, 2px 0 #fff, 3px 0 #a4acb3, 4px 0 #fff;
}
.tray {
  display: flex;
  align-items: center;
  margin-left: auto;
}
.charge {
  position: relative;
  width: 59px;
  height: 25px;
  margin-right: 26px;
  background: linear-gradient(to right, #0b5fb0 71%, #050505 71%);
  border: 1px solid #fff;
  outline: 1px solid #111;
  font-family: "DejaVu Sans", sans-serif;
  font-size: 12px;
  line-height: 23px;
  text-align: center;
}
/* battery terminal */
.charge::after {
  content: "";
  position: absolute;
  top: 5px;
  left: 100%;
  width: 4px;
  height: 13px;
  background: #111;
  border: 1px solid #fff;
  border-left: none;
}
.tray-icons {
  display: flex;
  align-items: center;
  gap: 10px;
  margin-left: 12px;
}
.language,
.clock {
  display: flex;
  flex-direction: column;
  align-items: center;
  line-height: 17px;
}
.language {
  width: 32px;
  margin-left: 10px;
}
.clock {
  width: 72px;
  margin-right: 7px;
}
```
